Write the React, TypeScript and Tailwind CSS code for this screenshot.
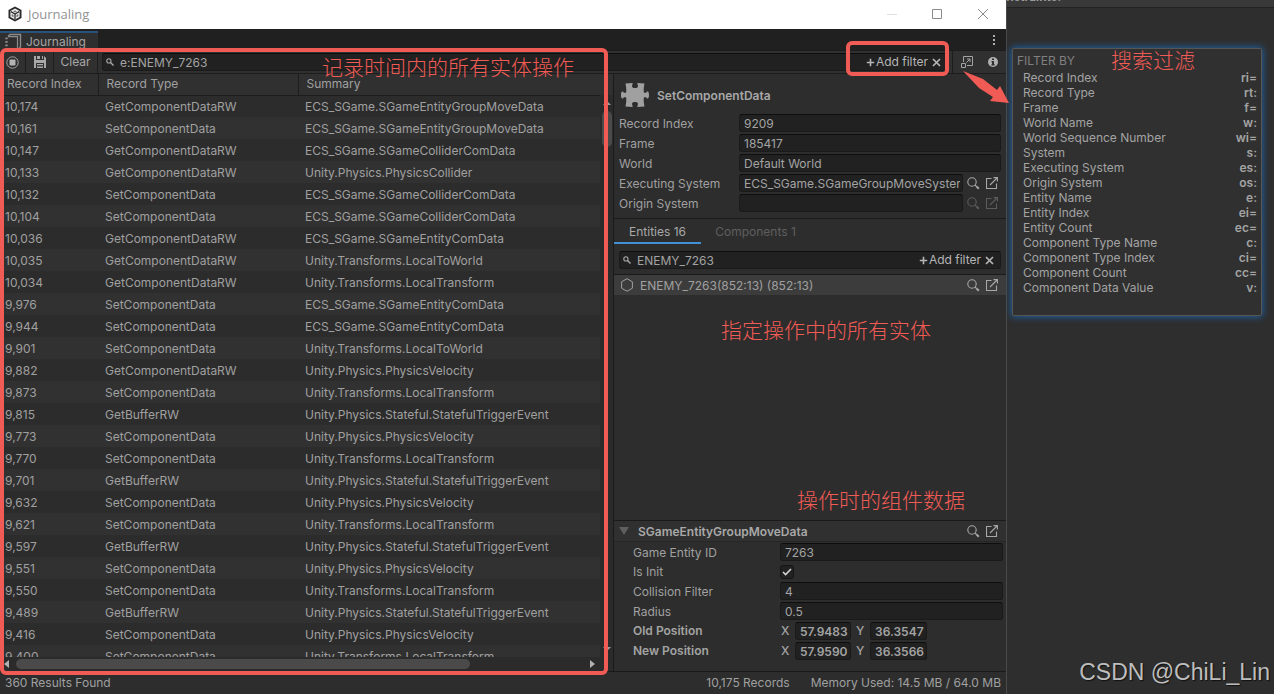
import { useState } from "react";
import type { ReactNode } from "react";

type LogRecord = { index: string; type: string; summary: string };

const GET = "GetComponentDataRW";
const SET = "SetComponentData";
const BUFFER = "GetBufferRW";

const records: LogRecord[] = [
  { index: "10,174", type: GET, summary: "ECS_SGame.SGameEntityGroupMoveData" },
  { index: "10,161", type: SET, summary: "ECS_SGame.SGameEntityGroupMoveData" },
  { index: "10,147", type: GET, summary: "ECS_SGame.SGameColliderComData" },
  { index: "10,133", type: GET, summary: "Unity.Physics.PhysicsCollider" },
  { index: "10,132", type: SET, summary: "ECS_SGame.SGameColliderComData" },
  { index: "10,104", type: SET, summary: "ECS_SGame.SGameColliderComData" },
  { index: "10,036", type: GET, summary: "ECS_SGame.SGameEntityComData" },
  { index: "10,035", type: GET, summary: "Unity.Transforms.LocalToWorld" },
  { index: "10,034", type: GET, summary: "Unity.Transforms.LocalTransform" },
  { index: "9,976", type: SET, summary: "ECS_SGame.SGameEntityComData" },
  { index: "9,944", type: SET, summary: "ECS_SGame.SGameEntityComData" },
  { index: "9,901", type: SET, summary: "Unity.Transforms.LocalToWorld" },
  { index: "9,882", type: GET, summary: "Unity.Physics.PhysicsVelocity" },
  { index: "9,873", type: SET, summary: "Unity.Transforms.LocalTransform" },
  { index: "9,815", type: BUFFER, summary: "Unity.Physics.Stateful.StatefulTriggerEvent" },
  { index: "9,773", type: SET, summary: "Unity.Physics.PhysicsVelocity" },
  { index: "9,770", type: SET, summary: "Unity.Transforms.LocalTransform" },
  { index: "9,701", type: BUFFER, summary: "Unity.Physics.Stateful.StatefulTriggerEvent" },
  { index: "9,632", type: SET, summary: "Unity.Physics.PhysicsVelocity" },
  { index: "9,621", type: SET, summary: "Unity.Transforms.LocalTransform" },
  { index: "9,597", type: BUFFER, summary: "Unity.Physics.Stateful.StatefulTriggerEvent" },
  { index: "9,551", type: SET, summary: "Unity.Physics.PhysicsVelocity" },
  { index: "9,550", type: SET, summary: "Unity.Transforms.LocalTransform" },
  { index: "9,489", type: BUFFER, summary: "Unity.Physics.Stateful.StatefulTriggerEvent" },
  { index: "9,416", type: SET, summary: "Unity.Physics.PhysicsVelocity" },
  { index: "9,400", type: SET, summary: "Unity.Transforms.LocalTransform" },
];

const filters = [
  ["Record Index", "ri="],
  ["Record Type", "rt:"],
  ["Frame", "f="],
  ["World Name", "w:"],
  ["World Sequence Number", "wi="],
  ["System", "s:"],
  ["Executing System", "es:"],
  ["Origin System", "os:"],
  ["Entity Name", "e:"],
  ["Entity Index", "ei="],
  ["Entity Count", "ec="],
  ["Component Type Name", "c:"],
  ["Component Type Index", "ci="],
  ["Component Count", "cc="],
  ["Component Data Value", "v:"],
];

const fieldClass =
  "h-[18px] min-w-0 rounded-[3px] border border-[#1a1a1a] border-t-[#0e0e0e] bg-[#212121] pl-1 text-[#a3a3a3] outline-none";

/* --- Icons --- */

function UnityIcon() {
  return (
    <svg width="14" height="16" viewBox="0 0 14 16">
      <path d="M7 .5 13.5 4v8L7 15.5.5 12V4z" fill="#2a2a2a" />
      <path d="M7 2.500 11.600 5v6L7 13.400 2.400 11V5z" fill="#f0f0f0" />
      <path d="M7 8V13M7 8 2.800 5.600M7 8l4.200-2.400" stroke="#2a2a2a" strokeWidth="1.300" />
      <path d="M7 4.200 9 5.400 7 6.500 5 5.400zM3.600 8l2 1.100v2.200l-2-1.100zM10.400 8l-2 1.100v2.200l2-1.100z" fill="#777777" />
    </svg>
  );
}

function JournalIcon() {
  return (
    <svg width="18" height="18" viewBox="0 0 18 18" fill="none" stroke="#8c8c8c">
      <path d="M3 3.500 5 1.500h10.500V14l-2 2" strokeWidth="1.400" />
      <path d="M3 3.700h9.500V17" strokeWidth="1.200" />
      <path d="M1.500 4.500v13" strokeWidth="2.400" strokeDasharray="1.800 1.700" />
    </svg>
  );
}

function SmallSearchIcon() {
  return (
    <svg width="8" height="8" viewBox="0 0 8 8" fill="none" stroke="#a8a8a8" className="shrink-0">
      <circle cx="2.900" cy="2.900" r="2.100" strokeWidth="1.100" />
      <path d="m4.500 4.500 3 3" strokeWidth="1.400" />
    </svg>
  );
}

function SearchIcon() {
  return (
    <svg width="13" height="13" viewBox="0 0 13 13" fill="none" stroke="currentColor">
      <circle cx="5" cy="5" r="4.200" strokeWidth="1.100" />
      <path d="m8 8 1.500 1.500" strokeWidth="1.100" />
      <path d="m9.400 9.400 2.400 2.400" strokeWidth="2" />
    </svg>
  );
}

function OpenIcon() {
  return (
    <svg width="12" height="12" viewBox="0 0 12 12" fill="none" stroke="currentColor" strokeWidth="1.100">
      <path d="M5.500 1.500h-5v10h10V6.500" />
      <path d="M4 8 11 1M7.500.6h3.900v3.900" />
    </svg>
  );
}

function PuzzleIcon() {
  return (
    <svg width="28" height="24" viewBox="0 0 28 24" fill="#a0a0a0">
      <path d="M4.500.600 11.500 0c.6 1-.6 2-.5 3.200.1 1.300 1.500 1.900 3 1.900s2.900-.6 3-1.900C17.100 2 15.900 1 16.500 0l7 .6c-.6 2.800-1.100 5.800-.6 9.100h2.300c.3-1 .7-1.300 1.400-1.300.900 0 1.400 1.500 1.400 3.600s-.5 3.600-1.400 3.600c-.7 0-1.100-.3-1.400-1.300h-2.300c-.5 3.300 0 6.300.6 9.100l-7 .6c-.6-1 .6-2 .5-3.200-.1-1.300-1.500-1.900-3-1.900s-2.900.6-3 1.900c-.1 1.200 1.100 2.200.5 3.200l-7-.6c.6-2.800 1.100-5.800.6-9.100H2.800c-.3 1-.7 1.300-1.400 1.300C.5 15.600 0 14.100 0 12s.5-3.600 1.400-3.600c.7 0 1.100.3 1.400 1.300h2.300c.5-3.300 0-6.300-.6-9.100z" />
    </svg>
  );
}

function PopOutIcon() {
  return (
    <svg width="12" height="12" viewBox="0 0 12 12" fill="none" stroke="#a3a3a3">
      <path d="M2.500 6V.5h9v9H6" />
      <path d="M.5 7.500h4v4h-4z" />
      <path d="M5.300 6.700 8.800 3.200M6 3h3v3" />
    </svg>
  );
}

/* --- Shared controls --- */

function IconLinks({ disabled = false }: { disabled?: boolean }) {
  return (
    <div className={`flex items-center gap-[6px] ${disabled ? "text-[#5c5c5c]" : "text-[#a8a8a8]"}`}>
      <button aria-label="Find" disabled={disabled}>
        <SearchIcon />
      </button>
      <button aria-label="Open" disabled={disabled}>
        <OpenIcon />
      </button>
    </div>
  );
}

function SearchField({ initial, label, className = "" }: { initial: string; label: string; className?: string }) {
  const [value, setValue] = useState(initial);
  return (
    <div
      className={`flex h-[18px] items-center rounded-[3px] border border-[#1a1a1a] border-t-[#0e0e0e] bg-[#212121] ${className}`}
    >
      <SmallSearchIcon />
      <input
        aria-label={label}
        value={value}
        onChange={(e) => setValue(e.target.value)}
        className="h-4 min-w-0 flex-1 bg-transparent pt-px pl-[6px] text-[#a3a3a3] outline-none"
      />
      <button className="flex items-center gap-px text-[#b5b5b5]">
        <svg width="9" height="9" viewBox="0 0 9 9" stroke="currentColor" strokeWidth="1.600">
          <path d="M4.500 .8v7.400M.8 4.500h7.400" />
        </svg>
        Add filter
      </button>
      <button aria-label="Clear search" className="ml-1 mr-[6px] text-[#b5b5b5]" onClick={() => setValue("")}>
        <svg width="9" height="9" viewBox="0 0 9 9" stroke="currentColor" strokeWidth="1.700">
          <path d="m1 1 7 7M8 1 1 8" />
        </svg>
      </button>
    </div>
  );
}

function Note({ className, children }: { className: string; children: ReactNode }) {
  return (
    <p
      className={`pointer-events-none absolute z-10 whitespace-nowrap font-['Noto_Sans_CJK_SC',sans-serif] text-[21px] leading-5 font-light text-[#f15b55] ${className}`}
    >
      {children}
    </p>
  );
}

function InfoRow({
  id,
  label,
  value,
  links,
}: {
  id: string;
  label: string;
  value: string;
  links?: "on" | "off";
}) {
  return (
    <div className="flex items-center">
      <label htmlFor={id} className="w-[120px] shrink-0 pt-[2px]">
        {label}
      </label>
      <input id={id} readOnly value={value} className={`flex-1 pr-[2px] ${fieldClass}`} />
      {links && (
        <div className="mr-[3px] ml-1">
          <IconLinks disabled={links === "off"} />
        </div>
      )}
    </div>
  );
}

function DataRow({ id, label, value }: { id: string; label: string; value: string }) {
  return (
    <div className="flex items-center">
      <label htmlFor={id} className="w-[147px] shrink-0 pt-px">
        {label}
      </label>
      <input id={id} readOnly value={value} className={`flex-1 ${fieldClass}`} />
    </div>
  );
}

function VectorRow({ id, label, x, y }: { id: string; label: string; x: string; y: string }) {
  return (
    <div className="flex items-center font-semibold text-[#a3a3a3]">
      <span className="w-[148px] shrink-0">{label}</span>
      <label htmlFor={`${id}-x`} className="w-[14px] font-medium">
        X
      </label>
      <input id={`${id}-x`} readOnly value={x} className={`w-14 ${fieldClass}`} />
      <label htmlFor={`${id}-y`} className="ml-[5px] w-[14px] font-medium">
        Y
      </label>
      <input id={`${id}-y`} readOnly value={y} className={`w-[57px] ${fieldClass}`} />
    </div>
  );
}

/* --- Window parts --- */

function TitleBar() {
  return (
    <div className="flex h-[29px] shrink-0 items-center bg-white pb-[2px] pl-2 text-[#929292]">
      <UnityIcon />
      <span className="ml-[6px] flex-1 font-['Open_Sans',sans-serif] text-[13px]">Journaling</span>
      <button aria-label="Minimize" className="flex w-[45px] justify-center">
        <svg width="10" height="10" stroke="#e0e0e0">
          <path d="M0 5.500h10" />
        </svg>
      </button>
      <button aria-label="Maximize" className="flex w-[46px] justify-center">
        <svg width="10" height="10" fill="none" stroke="#8a8a8a">
          <path d="M.5.5h9v9h-9z" />
        </svg>
      </button>
      <button aria-label="Close" className="flex w-[46px] justify-center">
        <svg width="10" height="10" stroke="#8a8a8a">
          <path d="m0 0 10 10M10 0 0 10" />
        </svg>
      </button>
    </div>
  );
}

function TabBar() {
  return (
    <div className="flex h-[21px] shrink-0 items-end bg-[#202020]">
      <button className="flex h-[19px] w-[98px] items-center gap-[3px] border-t-2 border-[#28527c] bg-[#2f2f2f] pl-[5px] text-[#a3a3a3]">
        <JournalIcon />
        Journaling
      </button>
      <button aria-label="Window menu" className="ml-auto mr-[10px] self-center">
        <svg width="4" height="12" fill="#b0b0b0">
          <path d="M1 1h2v2H1zM1 5h2v2H1zM1 9h2v2H1z" />
        </svg>
      </button>
    </div>
  );
}

function Toolbar() {
  return (
    <div className="flex h-6 shrink-0 items-stretch border-y border-[#1d1d1d] bg-[#303030]">
      <button aria-label="Record" className="flex w-[26px] items-center justify-center border-r border-[#1d1d1d]">
        <svg width="13" height="13" viewBox="0 0 13 13">
          <circle cx="6.500" cy="6.500" r="5.700" fill="none" stroke="#a5a5a5" />
          <rect x="3.500" y="3.500" width="6" height="6" rx="1" fill="#b5b5b5" />
        </svg>
      </button>
      <button aria-label="Save" className="flex w-7 items-center justify-center border-r border-[#1d1d1d]">
        <svg width="12" height="12" viewBox="0 0 12 12" fill="#a8a8a8">
          <path d="M0 0h2v4h8V0l2 2v10h-2V7H2v5H0zM3 0h3v3H3zM8 0h1v3H8zM3 8h6v1.200H3zM3 10.400h6V12H3z" />
        </svg>
      </button>
      <button className="w-11 border-r border-[#1d1d1d] text-[#a8a8a8]">Clear</button>
      <div className="flex min-w-0 flex-1 items-center px-1">
        <SearchField initial="e:ENEMY_7263" label="Search records" className="flex-1 pl-[3px]" />
      </div>
      <div className="flex items-center gap-[15px] border-l border-[#1d1d1d] pr-2 pl-2">
        <button aria-label="Open in new window">
          <PopOutIcon />
        </button>
        <button aria-label="Info">
          <svg width="10" height="10" viewBox="0 0 10 10">
            <circle cx="5" cy="5" r="5" fill="#b0b0b0" />
            <path d="M4 1.500h2v1.600H4zM3.500 4H6v3.300h.7v1.200H3.400V7.300H4V5.200h-.5z" fill="#2f2f2f" />
          </svg>
        </button>
      </div>
    </div>
  );
}

function RecordList() {
  return (
    <section className="relative flex min-w-0 flex-1 flex-col">
      <div className="relative min-h-0 flex-1 overflow-hidden">
        <table className="w-full table-fixed border-collapse text-left">
          <colgroup>
            <col className="w-[98px]" />
            <col className="w-[200px]" />
            <col />
          </colgroup>
          <thead>
            <tr className="h-[21px] border-b border-[#1d1d1d] bg-[#303030]">
              <th className="border-r border-[#1d1d1d] py-0 pl-[7px] font-normal">Record Index</th>
              <th className="border-r border-[#1d1d1d] py-0 pl-2 font-normal">Record Type</th>
              <th className="py-0 pl-2 font-normal">Summary</th>
            </tr>
          </thead>
          <tbody>
            {records.map((r) => (
              <tr key={r.index} className="h-[22px] odd:bg-[#2c2c2c] even:bg-[#313131]">
                <td className="pt-[2px] pb-0 pl-[5px]">{r.index}</td>
                <td className="pt-[2px] pb-0 pl-[7px]">{r.type}</td>
                <td className="pt-[2px] pb-0 pl-[7px]">{r.summary}</td>
              </tr>
            ))}
          </tbody>
        </table>

        {/* vertical scrollbar */}
        <div className="absolute top-[21px] right-0 bottom-0 flex w-[13px] flex-col items-center bg-[#2b2b2b] py-[6px]">
          <svg width="8" height="4" fill="#a0a0a0">
            <path d="M0 4h8L4 0z" />
          </svg>
          <div className="mt-[6px] h-9 w-[10px] rounded-full bg-[#4a4a4a]" />
          <svg width="8" height="4" fill="#a0a0a0" className="mt-auto">
            <path d="M0 0h8L4 4z" />
          </svg>
        </div>
      </div>

      {/* horizontal scrollbar */}
      <div className="flex h-[14px] shrink-0 items-center bg-[#2b2b2b] pr-[18px] pl-1">
        <svg width="5" height="8" fill="#b0b0b0">
          <path d="M5 0v8L0 4z" />
        </svg>
        <div className="ml-[7px] h-[10px] w-[454px] rounded-full bg-[#4a4a4a]" />
        <svg width="5" height="8" fill="#b0b0b0" className="ml-auto">
          <path d="M0 0v8l5-4z" />
        </svg>
      </div>

      <div className="pointer-events-none absolute -top-[26px] right-[5px] -bottom-1 left-0 rounded-md border-4 border-[#f15b55]" />
      <Note className="-top-[18px] left-[322px]">记录时间内的所有实体操作</Note>
    </section>
  );
}

function Details() {
  return (
    <section className="relative flex w-[393px] shrink-0 flex-col border-l border-[#1a1a1a] bg-[#2d2d2d]">
      <div className="flex flex-col gap-[2px] border-b border-[#1a1a1a] px-[5px] pb-[6px]">
        <div className="flex h-[38px] items-center gap-2 pt-1 pl-[2px]">
          <PuzzleIcon />
          <h2 className="pt-px font-semibold text-[#a8a8a8]">SetComponentData</h2>
        </div>
        <InfoRow id="record-index" label="Record Index" value="9209" />
        <InfoRow id="frame" label="Frame" value="185417" />
        <InfoRow id="world" label="World" value="Default World" />
        <InfoRow
          id="executing-system"
          label="Executing System"
          value="ECS_SGame.SGameGroupMoveSystem"
          links="on"
        />
        <InfoRow id="origin-system" label="Origin System" value="" links="off" />
      </div>

      <div className="flex h-[25px] shrink-0">
        <button className="w-[87px] border-b-2 border-[#4390d6] pt-[2px] text-[#a8a8a8]">Entities 16</button>
        <button className="w-[109px] border-b-2 border-transparent pt-[2px] text-[#5f5f5f]">Components 1</button>
      </div>

      <div className="border-b border-[#1a1a1a] px-[5px] pt-[7px] pb-[5px]">
        <SearchField initial="ENEMY_7263" label="Search entities" className="pl-[3px]" />
      </div>

      <div className="flex h-5 shrink-0 items-center bg-[#3c3c3c] pr-2 pl-[7px]">
        <svg width="12" height="14" viewBox="0 0 12 14" fill="none" stroke="#a0a0a0">
          <path d="m6 .7 5.400 3.100v6.400L6 13.300.6 10.200V3.800z" />
        </svg>
        <span className="ml-[7px] flex-1 pt-px">ENEMY_7263(852:13) (852:13)</span>
        <IconLinks />
      </div>

      <div className="flex-1" />

      <div className="flex h-[22px] shrink-0 items-center border-y border-t-[#1a1a1a] border-b-[#262626] bg-[#303030] pr-2 pl-[5px]">
        <svg width="10" height="8" fill="#5f5f5f">
          <path d="M0 0h10L5 8z" />
        </svg>
        <h3 className="ml-[9px] flex-1 pt-px font-semibold text-[#a8a8a8]">SGameEntityGroupMoveData</h3>
        <IconLinks />
      </div>
      <div className="flex flex-col gap-[2px] pt-px pr-[3px] pb-[11px] pl-[19px]">
        <DataRow id="entity-id" label="Game Entity ID" value="7263" />
        <div className="flex h-[17px] items-center">
          <label htmlFor="is-init" className="w-[147px]">
            Is Init
          </label>
          <span className="relative h-[14px] w-[14px]">
            <input
              id="is-init"
              type="checkbox"
              defaultChecked
              className="peer block h-[14px] w-[14px] appearance-none rounded-[3px] border border-[#151515] bg-[#212121]"
            />
            <svg
              width="10"
              height="8"
              viewBox="0 0 10 8"
              fill="none"
              stroke="#d5d5d5"
              strokeWidth="1.600"
              className="pointer-events-none absolute top-[3px] left-[2px] hidden peer-checked:block"
            >
              <path d="m1 4 2.600 2.600L9 1" />
            </svg>
          </span>
        </div>
        <DataRow id="collision-filter" label="Collision Filter" value="4" />
        <DataRow id="radius" label="Radius" value="0.5" />
        <VectorRow id="old-position" label="Old Position" x="57.9483" y="36.3547" />
        <VectorRow id="new-position" label="New Position" x="57.9590" y="36.3566" />
      </div>

      <Note className="top-[245px] left-[107px]">指定操作中的所有实体</Note>
      <Note className="bottom-[162px] left-[183px]">操作时的组件数据</Note>
    </section>
  );
}

function FilterPopup() {
  return (
    <aside className="relative flex w-[268px] shrink-0 flex-col border-l border-[#4a4a4a] bg-[#2e2e2e]">
      <div className="h-2 overflow-hidden border-b border-[#222222] bg-[#393939]">
        <p className="-mt-[11px] -ml-[8px] leading-4 font-semibold text-[#a3a3a3]">onstraints:</p>
      </div>
      <div className="relative mt-10 mr-3 ml-[5px] rounded-[2px] border border-[#565656] bg-[#303030] pt-1 pr-1 pb-5 pl-1 shadow-[0_0_7px_1px_#1f5f9f]">
        <h2 className="pb-px leading-4 text-[#808080]">FILTER BY</h2>
        <ul className="pl-[6px]">
          {filters.map(([name, token]) => (
            <li key={name}>
              <button className="flex h-[15px] w-full items-center justify-between text-[#a3a3a3]">
                <span>{name}</span>
                <span className="font-semibold">{token}</span>
              </button>
            </li>
          ))}
        </ul>
        <Note className="top-0 left-[98px]">搜索过滤</Note>
      </div>
      <p className="mt-auto mr-1 mb-2 self-end font-['Liberation_Sans',sans-serif] text-[23px] leading-7 whitespace-nowrap text-[#bdbdbd] [text-shadow:1px_1px_1px_#111111]">
        CSDN @ChiLi_Lin
      </p>
    </aside>
  );
}

export default function App() {
  return (
    <div className="flex h-screen overflow-hidden bg-[#2d2d2d] font-['Inter',sans-serif] text-[12px] leading-4 text-[#a0a0a0]">
      <main className="relative z-10 flex min-w-0 flex-1 flex-col bg-[#2d2d2d]">
        <TitleBar />
        <TabBar />
        <Toolbar />
        <div className="flex min-h-0 flex-1">
          <RecordList />
          <Details />
        </div>
        <footer className="flex h-[23px] shrink-0 items-center gap-[21px] border-t border-[#1a1a1a] px-[5px]">
          <span className="flex-1">360 Results Found</span>
          <span>10,175 Records</span>
          <span>Memory Used: 14.5 MB / 64.0 MB</span>
        </footer>

        {/* callout from "Add filter" to the popup */}
        <div className="pointer-events-none absolute top-[41px] right-[57px] h-[35px] w-[103px] rounded-md border-4 border-[#f15b55]" />
        <svg width="48" height="34" fill="#f15b55" className="pointer-events-none absolute top-[70px] -right-1">
          <path d="M1 1 21 9 35 20 38 16 47 33 28 31 31 27 17 18z" />
        </svg>
      </main>
      <FilterPopup />
    </div>
  );
}
